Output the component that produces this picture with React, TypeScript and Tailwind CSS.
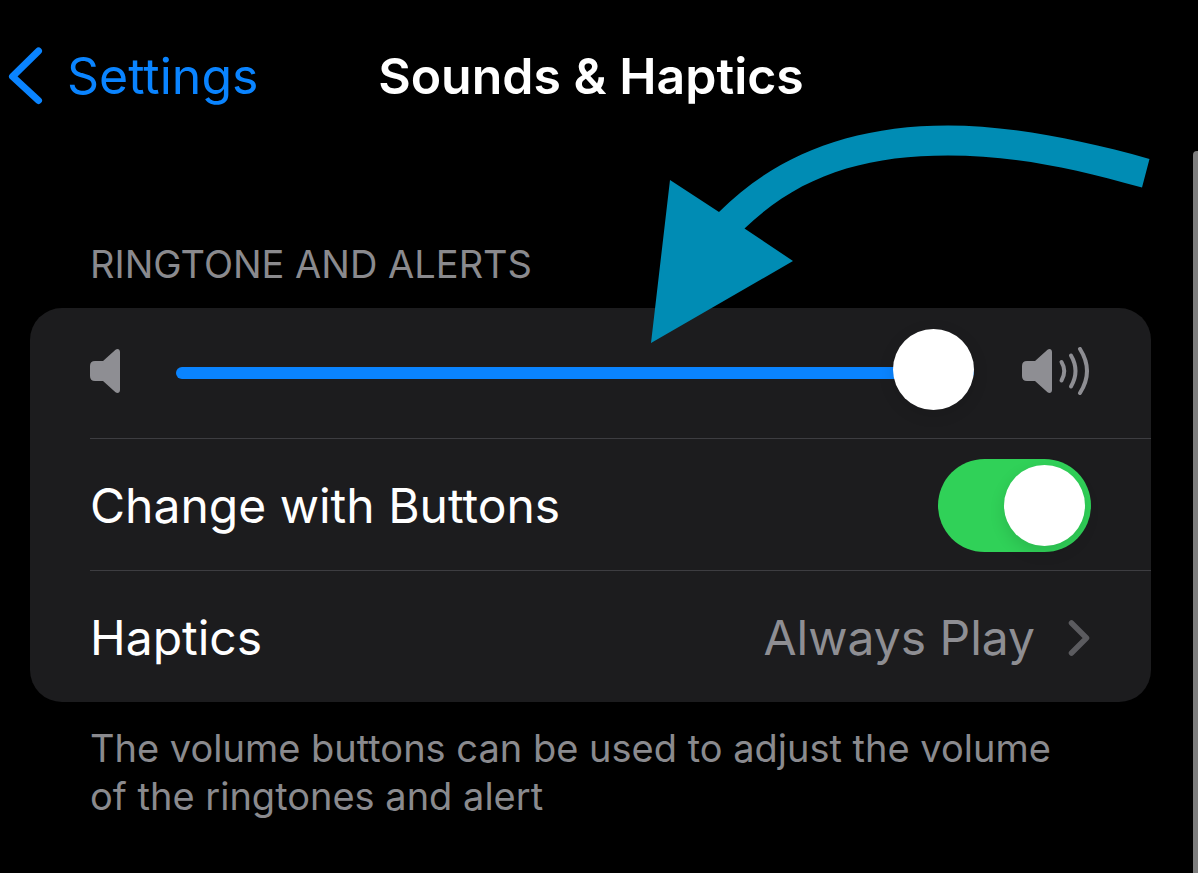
import { useState } from 'react';

function Speaker() {
  return (
    <path d="M5 12 H13 L25.5 0.8 C27.6 -0.9 30 0.4 30 3 V41 C30 43.6 27.6 44.9 25.5 43.2 L13 32 H5 Q0 32 0 27 V17 Q0 12 5 12 Z" />
  );
}

function SpeakerLow() {
  return (
    <svg className="mb-1 h-11 w-[30px] shrink-0 fill-[#8e8e93]" viewBox="0 0 30 44" aria-hidden="true">
      <Speaker />
    </svg>
  );
}

function SpeakerHigh() {
  return (
    <svg className="mb-1 h-12 w-[69px] shrink-0 fill-[#8e8e93]" viewBox="0 -2 69 48" aria-hidden="true">
      <Speaker />
      <g fill="none" stroke="#8e8e93" strokeWidth="4" strokeLinecap="round">
        <path d="M39.5 13 Q45 22 39.5 31.5" />
        <path d="M49 6.5 Q58 22 49 37.5" />
        <path d="M58 0 Q72 22 58 44" />
      </g>
    </svg>
  );
}

function CurvedArrow() {
  return (
    <svg
      className="pointer-events-none absolute top-[125px] left-[650px] h-[219px] w-[500px]"
      viewBox="650 125 500 219"
      fill="#008cb4"
      aria-hidden="true"
    >
      <path d="M651 343 L670 180 L719 212 C775 156 850 125.5 948 125.5 C1006 125.5 1075 138 1149.500 159 L1142 187.500 C1070 167 1012 155.500 948 155.500 C865 155.500 800 175 744.500 228.500 L793 261 Z" />
    </svg>
  );
}

export default function App() {
  const [volume, setVolume] = useState(100);
  const [withButtons, setWithButtons] = useState(true);

  return (
    <div className="relative min-h-screen overflow-hidden bg-black font-['Inter',sans-serif] text-white">
      <header className="grid grid-cols-[1fr_auto_1fr] items-center pt-11 pr-6 pl-2">
        <a href="#settings" className="flex items-center gap-6 text-[50px] leading-[64px] text-[#0a84ff]">
          <svg className="h-[58px] w-[35px]" viewBox="0 0 35 58" fill="none" aria-hidden="true">
            <path d="M30.500 4 L4.500 29.500 L30.500 53.500" stroke="currentColor" strokeWidth="7" strokeLinecap="round" strokeLinejoin="round" />
          </svg>
          Settings
        </a>
        <h1 className="text-[50px] leading-[64px] font-semibold">Sounds &amp; Haptics</h1>
      </header>

      <main className="pt-[132px] pr-[47px] pl-[30px]">
        <h2 className="mb-5 pl-[60px] text-[38px] leading-[48px] text-[#8a8a8e]">RINGTONE AND ALERTS</h2>

        <section className="rounded-[32px] bg-[#1c1c1e] pl-[60px] text-5xl">
          <div className="flex h-[131px] items-center border-b border-[#3d3d41] pr-[60px]">
            <SpeakerLow />
            <input
              type="range"
              min={0}
              max={100}
              value={volume}
              onChange={(e) => setVolume(Number(e.target.value))}
              aria-label="Ringtone and alerts volume"
              className="mr-12 ml-14 h-[88px] min-w-0 flex-1 cursor-pointer appearance-none bg-transparent [&::-webkit-slider-runnable-track]:h-3 [&::-webkit-slider-runnable-track]:rounded-full [&::-webkit-slider-runnable-track]:bg-[image:var(--track)] [&::-webkit-slider-thumb]:-mt-[38px] [&::-webkit-slider-thumb]:size-[81px] [&::-webkit-slider-thumb]:appearance-none [&::-webkit-slider-thumb]:rounded-full [&::-webkit-slider-thumb]:bg-white [&::-webkit-slider-thumb]:shadow-[0_4px_16px_rgba(0,0,0,0.12)]"
              style={{ '--track': `linear-gradient(to right, #0a84ff ${volume}%, #39393d ${volume}%)` } as React.CSSProperties}
            />
            <SpeakerHigh />
          </div>

          <label className="flex h-[132px] cursor-pointer items-center justify-between border-b border-[#3d3d41] pt-0.5 pr-[60px]">
            Change with Buttons
            <input
              type="checkbox"
              checked={withButtons}
              onChange={(e) => setWithButtons(e.target.checked)}
              className="h-[93px] w-[153px] shrink-0 cursor-pointer appearance-none rounded-full bg-[#39393d] p-1.5 before:block before:size-[81px] before:rounded-full before:bg-white before:shadow-[0_6px_16px_rgba(0,0,0,0.12)] before:transition-transform checked:bg-[#30d158] checked:before:translate-x-[60px]"
            />
          </label>

          <button type="button" className="flex h-[131px] w-full cursor-pointer items-center justify-between pt-0.5 pr-[60px] text-left">
            Haptics
            <span className="flex items-center gap-8 text-[#8e8e93]">
              Always Play
              <svg className="h-9 w-6" viewBox="0 0 24 36" fill="none" aria-hidden="true">
                <path d="M4.500 3 L19.500 18 L4.500 33" stroke="#5b5b5f" strokeWidth="5.500" strokeLinecap="round" strokeLinejoin="round" />
              </svg>
            </span>
          </button>
        </section>

        <p className="mt-[22px] px-[60px] text-[38px] leading-[48px] text-[#8a8a8e]">
          The volume buttons can be used to adjust the volume of the ringtones and alert
        </p>
      </main>

      <div className="absolute top-[151px] right-0 bottom-0 w-[5px] rounded-tl-sm bg-[#7e7e7e]" aria-hidden="true" />
      <CurvedArrow />
    </div>
  );
}
